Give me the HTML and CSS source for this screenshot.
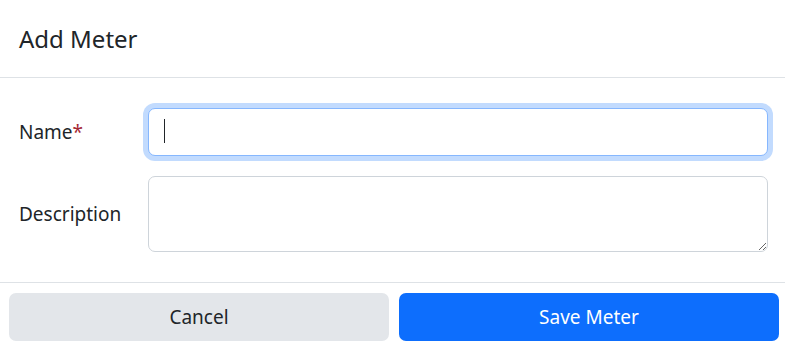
FILE: index.html
```html
<!DOCTYPE html>
<html lang="en">

<head>
    <meta charset="UTF-8">
    <meta name="viewport" content="width=device-width, initial-scale=1.0">
    <title>Add Meter</title>
    <link rel="stylesheet" href="styles.css">
</head>

<body>
    <div class="modal-content">
        <div class="modal-header">
            <h4 class="modal-title">Add Meter</h4>
        </div>
        <div class="modal-body">
            <div class="form-row">
                <label for="meter_name">Name<span class="required">*</span></label>
                <div class="field focused">
                    <input type="text" id="meter_name" class="form-control" value="">
                    <span class="caret"></span>
                </div>
            </div>
            <div class="form-row">
                <label for="meter_desc">Description</label>
                <div class="field">
                    <textarea id="meter_desc" class="form-control" rows="2"></textarea>
                </div>
            </div>
        </div>
        <div class="modal-footer">
            <button class="btn btn-cancel">Cancel</button>
            <button class="btn btn-primary">Save Meter</button>
        </div>
    </div>
</body>

</html>
```

FILE: styles.css
```css
body {
    margin: 0;
    background: #fff;
    font-family: "Segoe UI", "Noto Sans", sans-serif;
    font-size: 19px;
    color: #212529;
}

.modal-content {
    width: 785px;
}

.modal-header {
    height: 77px;
    display: flex;
    align-items: center;
    padding: 0 20px 0 19px;
    border-bottom: 1px solid #dee2e6;
}

.modal-title {
    margin: 0;
    font-size: 24px;
    font-weight: 400;
    line-height: 1.5;
}

.modal-body {
    padding: 30px 17px 30px 19px;
    display: flex;
    flex-direction: column;
    gap: 20px;
}

.form-row {
    display: flex;
    align-items: center;
}

.form-row label {
    width: 129px;
    flex-shrink: 0;
}

.desc-label {
    font-size: 18.5px;
}

.required {
    color: #a52834;
}

.field {
    position: relative;
    flex: 1;
    display: flex;
}

.form-control {
    box-sizing: border-box;
    width: 100%;
    margin: 0;
    font: inherit;
    color: #212529;
    background: #fff;
    border: 1px solid #ced4da;
    border-radius: 7px;
    padding: 7px 15px;
    outline: none;
}

input.form-control {
    height: 48px;
}

textarea.form-control {
    height: 76px;
    resize: vertical;
}

.focused .form-control {
    border-color: #86b7fe;
    box-shadow: 0 0 0 5px rgba(13, 110, 253, 0.25);
}

.caret {
    position: absolute;
    left: 16px;
    top: 11px;
    width: 1px;
    height: 24px;
    background: #212529;
}

.modal-footer {
    border-top: 1px solid #dee2e6;
    display: flex;
    gap: 10px;
    padding: 10px 6px 6px 9px;
}

.btn {
    flex: 1;
    height: 48px;
    font: inherit;
    border: none;
    border-radius: 7px;
    cursor: pointer;
}

.btn-cancel {
    background: #e3e6ea;
    color: #212529;
}

.btn-primary {
    background: #0d6efd;
    color: #fff;
}
```
